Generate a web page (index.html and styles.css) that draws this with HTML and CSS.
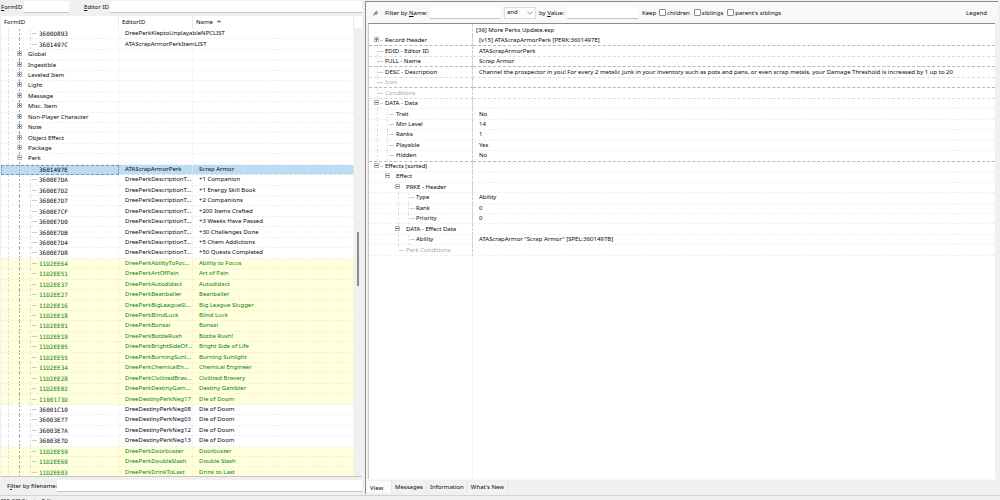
FILE: index.html
```html
<!DOCTYPE html>
<html lang="en">
<head>
<meta charset="utf-8">
<title>Record editor</title>
<link rel="stylesheet" href="styles.css">
</head>
<body>
<div class="app">
<main class="panes">
<section class="nav">
<div class="nav-top">
<label for="formid"><u>F</u>ormID</label><input id="formid" class="short" type="text">
<label for="edid" class="edid"><u>E</u>ditor ID</label><input id="edid" class="fill" type="text">
</div>
<div class="list">
<div class="scroll">
<table class="records">
<colgroup><col class="c-form"><col class="c-editor"><col></colgroup>
<thead><tr><th>FormID</th><th>EditorID</th><th>Name <svg class="sort" viewBox="0 0 6 4"><path d="M0.5 3.2 3 1 5.5 3.2Z"/></svg></th></tr></thead>
<tbody>
<tr><td class="leaf">3600D893</td><td class="over">DreePerkKleptoUnplayableNPCLIST</td><td></td></tr>
<tr><td class="leaf">3601497C</td><td class="over">ATAScrapArmorPerkItemLIST</td><td></td></tr>
<tr><td class="group"><i class="box plus"></i>Global</td><td></td><td></td></tr>
<tr><td class="group"><i class="box plus"></i>Ingestible</td><td></td><td></td></tr>
<tr><td class="group"><i class="box plus"></i>Leveled Item</td><td></td><td></td></tr>
<tr><td class="group"><i class="box plus"></i>Light</td><td></td><td></td></tr>
<tr><td class="group"><i class="box plus"></i>Message</td><td></td><td></td></tr>
<tr><td class="group"><i class="box plus"></i>Misc. Item</td><td></td><td></td></tr>
<tr><td class="group"><i class="box plus"></i>Non-Player Character</td><td></td><td></td></tr>
<tr><td class="group"><i class="box plus"></i>Note</td><td></td><td></td></tr>
<tr><td class="group"><i class="box plus"></i>Object Effect</td><td></td><td></td></tr>
<tr><td class="group"><i class="box plus"></i>Package</td><td></td><td></td></tr>
<tr><td class="group"><i class="box"></i>Perk</td><td></td><td></td></tr>
<tr class="selected"><td class="leaf">3601497E</td><td>ATAScrapArmorPerk</td><td>Scrap Armor</td></tr>
<tr><td class="leaf">3600E7DA</td><td>DreePerkDescriptionT...</td><td>+1 Companion</td></tr>
<tr><td class="leaf">3600E7D2</td><td>DreePerkDescriptionT...</td><td>+1 Energy Skill Book</td></tr>
<tr><td class="leaf">3600E7D7</td><td>DreePerkDescriptionT...</td><td>+2 Companions</td></tr>
<tr><td class="leaf">3600E7CF</td><td>DreePerkDescriptionT...</td><td>+200 Items Crafted</td></tr>
<tr><td class="leaf">3600E7D0</td><td>DreePerkDescriptionT...</td><td>+3 Weeks Have Passed</td></tr>
<tr><td class="leaf">3600E7DB</td><td>DreePerkDescriptionT...</td><td>+30 Challenges Done</td></tr>
<tr><td class="leaf">3600E7D4</td><td>DreePerkDescriptionT...</td><td>+5 Chem Addictions</td></tr>
<tr><td class="leaf">3600E7D8</td><td>DreePerkDescriptionT...</td><td>+50 Quests Completed</td></tr>
<tr class="new"><td class="leaf">11D2EE64</td><td>DreePerkAbilityToFoc...</td><td>Ability to Focus</td></tr>
<tr class="new"><td class="leaf">11D2EE51</td><td>DreePerkArtOfPain</td><td>Art of Pain</td></tr>
<tr class="new"><td class="leaf">11D2EE37</td><td>DreePerkAutodidact</td><td>Autodidact</td></tr>
<tr class="new"><td class="leaf">11D2EE27</td><td>DreePerkBeanballer</td><td>Beanballer</td></tr>
<tr class="new"><td class="leaf">11D2EE16</td><td>DreePerkBigLeagueSl...</td><td>Big League Slugger</td></tr>
<tr class="new"><td class="leaf">11D2EE18</td><td>DreePerkBlindLuck</td><td>Blind Luck</td></tr>
<tr class="new"><td class="leaf">11D2EE01</td><td>DreePerkBonsai</td><td>Bonsai</td></tr>
<tr class="new"><td class="leaf">11D2EE19</td><td>DreePerkBottleRush</td><td>Bottle Rush!</td></tr>
<tr class="new"><td class="leaf">11D2EE05</td><td>DreePerkBrightSideOf...</td><td>Bright Side of Life</td></tr>
<tr class="new"><td class="leaf">11D2EE55</td><td>DreePerkBurningSunl...</td><td>Burning Sunlight</td></tr>
<tr class="new"><td class="leaf">11D2EE34</td><td>DreePerkChemicalEn...</td><td>Chemical Engineer</td></tr>
<tr class="new"><td class="leaf">11D2EE28</td><td>DreePerkCivilizedBrav...</td><td>Civilized Bravery</td></tr>
<tr class="new"><td class="leaf">11D2EE02</td><td>DreePerkDestinyGam...</td><td>Destiny Gambler</td></tr>
<tr class="new"><td class="leaf">1100173D</td><td>DreeDestinyPerkNeg17</td><td>Die of Doom</td></tr>
<tr><td class="leaf">36001C10</td><td>DreeDestinyPerkNeg08</td><td>Die of Doom</td></tr>
<tr><td class="leaf">36003E77</td><td>DreeDestinyPerkNeg03</td><td>Die of Doom</td></tr>
<tr><td class="leaf">36003E7A</td><td>DreeDestinyPerkNeg12</td><td>Die of Doom</td></tr>
<tr><td class="leaf">36003E7D</td><td>DreeDestinyPerkNeg13</td><td>Die of Doom</td></tr>
<tr class="new"><td class="leaf">11D2EE59</td><td>DreePerkDoorbuster</td><td>Doorbuster</td></tr>
<tr class="new"><td class="leaf">11D2EE60</td><td>DreePerkDoubleSlash</td><td>Double Slash</td></tr>
<tr class="new"><td class="leaf">11D2EE03</td><td>DreePerkDrinkToLast</td><td>Drink to Last</td></tr>
</tbody>
</table>
</div>
<div class="track"><div class="thumb"></div></div>
</div>
<div class="nav-bottom"><label for="fname">F<u>i</u>lter by filename:</label><input id="fname" class="fill" type="text"></div>
</section>
<section class="view">
<div class="tools">
<svg class="pin" viewBox="0 0 6 6"><path d="M0.5 5.5 2.2 3.8M1.2 2.6 3.4 4.8M1.8 3.2 3.4 1.8 3.2 1 5 2.8 4.2 2.7 2.9 4.2"/></svg>
<label for="byname" class="byname">Filter by <u>N</u>ame:</label><input id="byname" class="mid" type="text">
<span class="combo"><select aria-label="Operator"><option>and</option></select><svg viewBox="0 0 6 4"><path d="M0.5 0.8 3 3.2 5.5 0.8"/></svg></span>
<label for="byvalue" class="byvalue">by <u>V</u>alue:</label><input id="byvalue" class="mid" type="text">
<span class="keep">Keep</span>
<label class="check"><input type="checkbox">children</label>
<label class="check"><input type="checkbox">siblings</label>
<label class="check"><input type="checkbox">parent's siblings</label>
<button class="legend" type="button">Legend</button>
</div>
<div class="sheet">
<table class="fields">
<colgroup><col class="c-field"><col></colgroup>
<thead><tr><th></th><th>[36] More Perks Update.esp</th></tr></thead>
<tbody>
<tr class="rule"><td class="l0"><i class="box plus"></i>Record Header</td><td>[v15] ATAScrapArmorPerk [PERK:3601497E]</td></tr>
<tr class="soft"><td class="l0 stub">EDID - Editor ID</td><td>ATAScrapArmorPerk</td></tr>
<tr class="rule"><td class="l0 stub">FULL - Name</td><td>Scrap Armor</td></tr>
<tr class="soft"><td class="l0 stub">DESC - Description</td><td>Channel the prospector in you! For every 2 metalic junk in your inventory such as pots and pans, or even scrap metals, your Damage Threshold is increased by 1 up to 20</td></tr>
<tr class="rule off"><td class="l0 stub">Icon</td><td></td></tr>
<tr class="soft off"><td class="l0 stub">Conditions</td><td></td></tr>
<tr><td class="l0"><i class="box"></i>DATA - Data</td><td></td></tr>
<tr><td class="l1 stub">Trait</td><td>No</td></tr>
<tr><td class="l1 stub">Min Level</td><td>14</td></tr>
<tr><td class="l1 stub">Ranks</td><td>1</td></tr>
<tr><td class="l1 stub">Playable</td><td>Yes</td></tr>
<tr class="rule"><td class="l1 stub">Hidden</td><td>No</td></tr>
<tr><td class="l0 end"><i class="box"></i>Effects (sorted)</td><td></td></tr>
<tr><td class="l1 end"><i class="box"></i>Effect</td><td></td></tr>
<tr><td class="l2"><i class="box"></i>PRKE - Header</td><td></td></tr>
<tr><td class="l3 stub">Type</td><td>Ability</td></tr>
<tr><td class="l3 stub">Rank</td><td>0</td></tr>
<tr><td class="l3 stub">Priority</td><td>0</td></tr>
<tr><td class="l2"><i class="box"></i>DATA - Effect Data</td><td></td></tr>
<tr><td class="l3 stub">Ability</td><td>ATAScrapArmor "Scrap Armor" [SPEL:3601497B]</td></tr>
<tr class="off"><td class="l2 stub">Perk Conditions</td><td></td></tr>
</tbody>
</table>
<div class="blank"></div>
</div>
<nav class="tabs"><button class="on" type="button">View</button><button type="button">Messages</button><button type="button">Information</button><button type="button">What's New</button></nav>
</section>
</main>
<footer class="status">[00:00] Start: xEdit</footer>
</div>
</body>
</html>
```
FILE: styles.css
```css
* { box-sizing: border-box; }
body { margin: 0; background: #f0f0f0; color: #08080c; font: 6px/10px "Noto Sans", "Open Sans", sans-serif; overflow: hidden; }
.app { height: 100vh; display: flex; flex-direction: column; }
.panes { flex: 1; min-height: 0; display: grid; grid-template-columns: 363px 1fr; gap: 2px; }
input, select, button { font: inherit; color: inherit; margin: 0; padding: 0; border: 0; border-radius: 0; }
input[type="text"] { min-width: 0; height: 12px; background: #fff; border-bottom: 1px solid #c4c4c4; }
u { text-underline-offset: 1px; }

.nav { display: flex; flex-direction: column; min-height: 0; padding: 0 1px; }
.nav-top { display: flex; align-items: center; height: 16px; padding-bottom: 3px; }
.nav-top label { width: 23px; white-space: nowrap; }
.nav-top .edid { width: 26px; margin-left: 15px; }
.short { width: 45px; }
.fill { flex: 1; }
.list { flex: 1; min-height: 0; display: flex; background: #fff; border-bottom: 1px solid #c4c4c4; }
.scroll { flex: 1; min-height: 0; overflow: hidden; }
.track { width: 8px; margin-top: 12px; background: #f0f0f0; padding: 204px 0 0 3px; }
.thumb { width: 2px; height: 54px; background: #8c8c8c; }
table { width: 100%; border-collapse: separate; border-spacing: 0; table-layout: fixed; }
th { font-weight: 400; text-align: left; }
th, td { padding: 0; white-space: nowrap; line-height: 9px; }
.records { height: 462px; }
.records th { height: 13px; padding-left: 3px; border-right: 1px solid #ececec; }
.c-form { width: 118px; }
.c-editor { width: 74px; }
.c-field { width: 104px; }
.records td { border-bottom: 1px dashed #f1f1f1; border-right: 1px dotted #eee; padding-left: 6px; }
.records .over { border-right-color: transparent; }
.sort { width: 6px; height: 4px; margin-left: 2px; fill: #777; vertical-align: 1px; }
.records td.leaf, .records td.group {
  --mid: linear-gradient(#a4a4a4 50%, transparent 50%) 18px 0 / 1px 4px repeat-y;
  --outer: linear-gradient(#ddd 50%, transparent 50%) 7px 0 / 1px 4px repeat-y;
  background: var(--mid), var(--outer);
}
.records td.leaf {
  padding-left: 38px;
  font: 6px/9px "DejaVu Sans Mono", monospace;
  background: linear-gradient(#ccc, #ccc) 31px 50% / 5px 1px no-repeat, linear-gradient(#ddd 50%, transparent 50%) 29px 0 / 1px 4px repeat-y, var(--mid), var(--outer);
}
.records td.group { padding-left: 16px; }
.box { display: inline-block; width: 5px; height: 5px; margin-right: 6px; border: 1px solid #b4b9c0; background: linear-gradient(#667, #667) 50% / 3px 1px no-repeat #fff; }
.box.plus { background: linear-gradient(#778, #778) 50% / 3px 1px no-repeat, linear-gradient(#778, #778) 50% / 1px 3px no-repeat #fff; }
.selected { background: #bcdcf4; }
.records .selected .leaf { outline: 1px dashed #7f97a8; outline-offset: -1px; }
.new { background: #ffffdc; color: #088408; }
.new td { border-color: #f1f1d8; }
.nav-bottom { display: flex; align-items: center; height: 18px; padding-left: 6px; }
.nav-bottom label { width: 50px; white-space: nowrap; }

.view { display: flex; flex-direction: column; min-width: 0; min-height: 0; margin: 1px 2px 1px 0; border-top: 1px solid #8c8c8c; border-left: 1px solid #8c8c8c; }
.tools { display: flex; align-items: center; height: 21px; padding: 0 11px 0 7px; background: #f8f8f8; white-space: nowrap; }
.pin { width: 6px; height: 6px; fill: none; stroke: #666; stroke-width: 1; }
.byname { margin-left: 6px; width: 45px; }
.mid { width: 71px; }
.combo { display: flex; align-items: center; width: 32px; height: 12px; margin: 0 3px; padding: 0 2px; background: #fcfcfc; border: 1px solid #ddd; }
.combo select { flex: 1; min-width: 0; appearance: none; background: none; line-height: 9px; }
.combo svg { width: 6px; height: 4px; fill: none; stroke: #999; stroke-width: 1; pointer-events: none; }
.byvalue { width: 28px; }
.keep { margin: 0 3px 0 4px; width: 14px; }
.check { display: flex; align-items: center; gap: 1px; margin-right: 4px; }
.check input { appearance: none; width: 7px; height: 7px; border: 1px solid #8c8c8c; border-radius: 1px; background: #fff; }
.legend { margin-left: auto; background: none; }
.sheet { flex: 1; min-height: 0; display: flex; flex-direction: column; margin: 0 3px 0 2px; background: #fff; border-top: 1px solid #8c8c8c; border-left: 1px solid #ccc; }
.fields { height: 232px; }
.fields th { height: 12px; padding: 0 0 0 3px; }
.fields td { border-bottom: 1px dashed #f1f1f1; padding-left: 6px; }
.fields tr > :first-child { border-right: 1px dashed #ccc; }
.fields .rule td { border-bottom-color: #b8b8b8; }
.fields .soft td { border-bottom-color: #ddd; }
.off { color: #a8a8a8; }
.fields td.l0, .fields td.l1, .fields td.l2, .fields td.l3 {
  --dash: linear-gradient(#ddd 50%, transparent 50%);
  --tick: linear-gradient(#ccc, #ccc);
}
.fields .l0 { padding-left: 5px; background: var(--dash) 8px 0 / 1px 4px repeat-y, var(--tick) 11px 50% / 3px 1px no-repeat; }
.fields .l0.stub { padding-left: 16px; background: var(--dash) 8px 0 / 1px 4px repeat-y, var(--tick) 9px 50% / 5px 1px no-repeat; }
.fields .l0.end { background: var(--tick) 11px 50% / 3px 1px no-repeat; }
.fields .l1 { padding-left: 16px; }
.fields .l1.stub { padding-left: 27px; background: var(--dash) 8px 0 / 1px 4px repeat-y, var(--dash) 18px 0 / 1px 4px repeat-y, var(--tick) 20px 50% / 5px 1px no-repeat; }
.fields .l2 { padding-left: 26px; background: var(--dash) 29px 0 / 1px 4px repeat-y; }
.fields .l2.stub { padding-left: 37px; background: var(--dash) 29px 0 / 1px 50% no-repeat, var(--tick) 30px 50% / 5px 1px no-repeat; }
.fields .l3.stub { padding-left: 47px; background: var(--dash) 29px 0 / 1px 4px repeat-y, var(--dash) 39px 0 / 1px 4px repeat-y, var(--tick) 41px 50% / 5px 1px no-repeat; }
.blank { flex: 1; width: 104px; border-right: 1px dotted #eee; }
.tabs { display: flex; height: 15px; padding: 1px 0 0; border-top: 1px solid #f8f8f8; }
.tabs button { height: 11px; padding: 0 3px; background: #f2f2f2; border-right: 1px solid #e4e4e4; line-height: 10px; }
.tabs .on { height: 12px; width: 26px; padding: 1px 4px 0; text-align: left; background: #fafafa; }
.status { height: 5px; padding: 1px 1px 0; border-top: 1px solid #d4d4d4; line-height: 9px; }
```
